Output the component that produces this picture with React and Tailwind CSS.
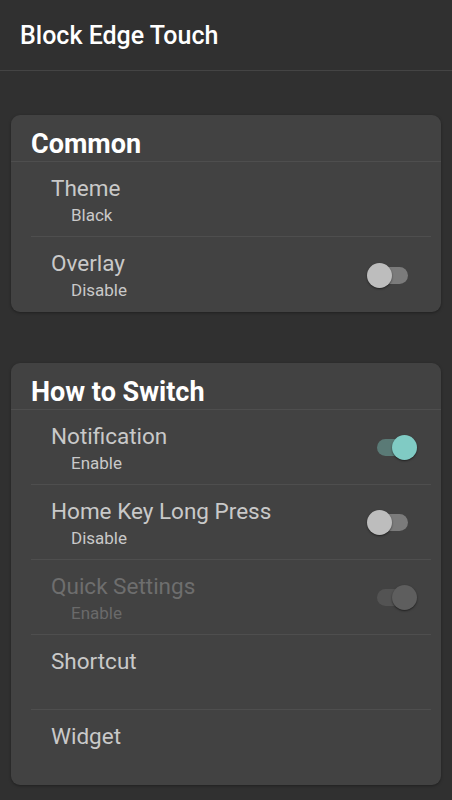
import React from "react";

function Toggle({ state }) {
  // state: "on" | "off" | "disabled"
  const track =
    state === "on" ? "bg-[#5a7a76]" : state === "off" ? "bg-[#7b7b7b]" : "bg-[#535353]";
  const thumb =
    state === "on" ? "bg-[#80cbc4] left-[25px]" : state === "off" ? "bg-[#bdbdbd] left-0" : "bg-[#5e5e5e] left-[25px]";
  return (
    <div className="relative w-[50px] h-[25px] shrink-0">
      <div className={`absolute left-[10px] right-[9px] top-[4px] h-[17px] rounded-full ${track}`} />
      <div
        className={`absolute top-0 w-[25px] h-[25px] rounded-full shadow-[0_1px_2px_rgba(0,0,0,0.5)] ${thumb}`}
      />
    </div>
  );
}

function Row({ title, sub, toggle, disabled, last }) {
  return (
    <div className={`ml-[20px] mr-[10px] h-[75px] flex items-start ${last ? "" : "border-b border-[#4e4e4e]"}`}>
      <div className="flex-1 pl-[20px] pt-[13px]">
        <div
          className={`text-[22.5px] leading-[26px] ${disabled ? "text-[#6e6e6e]" : "text-[#c9c9c9]"}`}
        >
          {title}
        </div>
        {sub && (
          <div
            className={`pl-[20px] mt-[3px] text-[17px] leading-[22px] ${disabled ? "text-[#6a6a6a]" : "text-[#c9c9c9]"}`}
          >
            {sub}
          </div>
        )}
      </div>
      {toggle && (
        <div className="self-center mr-[14px] mt-[1px]">
          <Toggle state={toggle} />
        </div>
      )}
    </div>
  );
}

function Card({ title, children, className }) {
  return (
    <div className={`mx-[11px] rounded-[9px] bg-[#424242] shadow-[0_1px_3px_rgba(0,0,0,0.35)] ${className || ""}`}>
      <div className="h-[47px] pl-[20px] pt-[14px] border-b border-[#4e4e4e]">
        <div className="text-[27px] leading-[30px] font-bold text-white">{title}</div>
      </div>
      {children}
    </div>
  );
}

export default function App() {
  return (
    <div
      className="w-[452px] h-[800px] bg-[#303030] overflow-hidden"
      style={{ fontFamily: "Roboto, 'Noto Sans', sans-serif" }}
    >
      <div className="h-[71px] border-b border-[#444444] flex items-start pl-[20px] pt-[21px]">
        <div className="text-[25px] leading-[30px] font-medium text-white">Block Edge Touch</div>
      </div>
      <Card title="Common" className="mt-[44px]">
        <Row title="Theme" sub="Black" />
        <Row title="Overlay" sub="Disable" toggle="off" last />
      </Card>
      <Card title="How to Switch" className="mt-[51px]">
        <Row title="Notification" sub="Enable" toggle="on" />
        <Row title="Home Key Long Press" sub="Disable" toggle="off" />
        <Row title="Quick Settings" sub="Enable" toggle="disabled" disabled />
        <Row title="Shortcut" />
        <Row title="Widget" last />
      </Card>
    </div>
  );
}
